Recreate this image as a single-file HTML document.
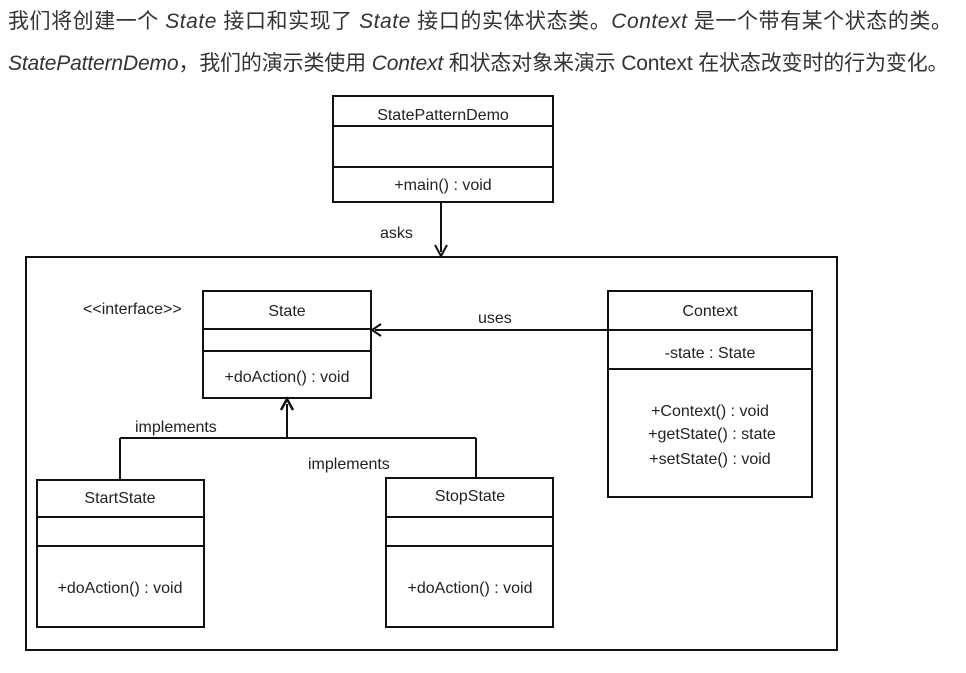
<!DOCTYPE html>
<html><head><meta charset="utf-8"><style>
html,body{margin:0;padding:0;background:#fff;width:966px;height:673px;overflow:hidden}
.t{position:absolute;left:8px;font:21px/24px "Liberation Sans","Noto Sans CJK SC",sans-serif;color:#333;white-space:nowrap}
i{font-style:italic}
svg{position:absolute;left:0;top:0}
svg text{font-family:"Liberation Sans",sans-serif;font-size:16px;fill:#222}
</style></head><body>
<div class="t" style="top:10px;letter-spacing:0.55px">我们将创建一个 <i>State</i> 接口和实现了 <i>State</i> 接口的实体状态类。<i>Context</i> 是一个带有某个状态的类。</div>
<div class="t" style="top:52px;letter-spacing:-0.15px"><i>StatePatternDemo</i>，我们的演示类使用 <i>Context</i> 和状态对象来演示 Context 在状态改变时的行为变化。</div>
<svg width="966" height="673" viewBox="0 0 966 673">
<g fill="none" stroke="#111" stroke-width="2">
<rect x="333" y="96" width="220" height="106"/>
<line x1="333" y1="126" x2="553" y2="126"/><line x1="333" y1="167" x2="553" y2="167"/>
<line x1="441" y1="202" x2="441" y2="252"/>
<rect x="26" y="257" width="811" height="393"/>
<rect x="203" y="291" width="168" height="107"/>
<line x1="203" y1="329" x2="371" y2="329"/><line x1="203" y1="351" x2="371" y2="351"/>
<line x1="608" y1="330" x2="375" y2="330"/>
<rect x="608" y="291" width="204" height="206"/>
<line x1="608" y1="330" x2="812" y2="330"/><line x1="608" y1="369" x2="812" y2="369"/>
<line x1="287" y1="404" x2="287" y2="438"/>
<line x1="120" y1="438" x2="476" y2="438"/>
<line x1="120" y1="438" x2="120" y2="480"/>
<line x1="476" y1="438" x2="476" y2="478"/>
<rect x="37" y="480" width="167" height="147"/>
<line x1="37" y1="517" x2="204" y2="517"/><line x1="37" y1="546" x2="204" y2="546"/>
<rect x="386" y="478" width="167" height="149"/>
<line x1="386" y1="517" x2="553" y2="517"/><line x1="386" y1="546" x2="553" y2="546"/>
</g>
<path d="M435 245 L441 256 L447 245" fill="none" stroke="#111" stroke-width="2"/>
<path d="M381 324 L372 330 L381 336" fill="none" stroke="#111" stroke-width="2"/>
<path d="M281 410 L287 399 L293 410" fill="none" stroke="#111" stroke-width="2.5"/>
<text x="443" y="120" text-anchor="middle">StatePatternDemo</text>
<text x="443" y="190" text-anchor="middle">+main() : void</text>
<text x="380" y="238">asks</text>
<text x="83" y="314">&lt;&lt;interface&gt;&gt;</text>
<text x="287" y="316" text-anchor="middle">State</text>
<text x="287" y="382" text-anchor="middle">+doAction() : void</text>
<text x="478" y="323">uses</text>
<text x="710" y="316" text-anchor="middle">Context</text>
<text x="710" y="358" text-anchor="middle">-state : State</text>
<text x="710" y="416" text-anchor="middle">+Context() : void</text>
<text x="712" y="439" text-anchor="middle">+getState() : state</text>
<text x="710" y="464" text-anchor="middle">+setState() : void</text>
<text x="135" y="432">implements</text>
<text x="308" y="469">implements</text>
<text x="120" y="503" text-anchor="middle">StartState</text>
<text x="120" y="593" text-anchor="middle">+doAction() : void</text>
<text x="470" y="501" text-anchor="middle">StopState</text>
<text x="470" y="593" text-anchor="middle">+doAction() : void</text>
</svg>
</body></html>
